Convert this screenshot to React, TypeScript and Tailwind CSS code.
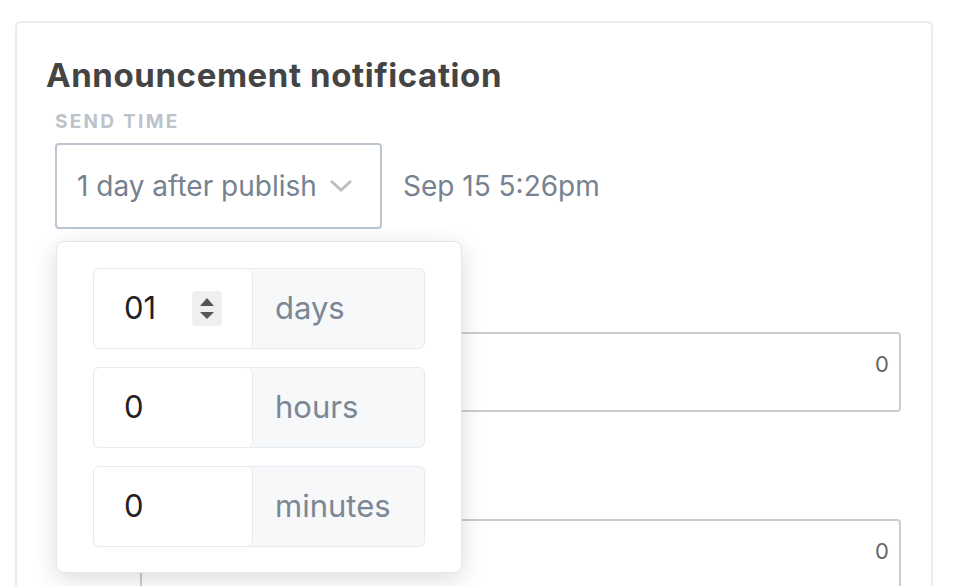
const font = { fontFamily: 'Inter, "Noto Sans", sans-serif' }

function Spinner() {
  return (
    <div className="flex h-[35px] w-[30px] flex-col items-center justify-center gap-[6px] rounded-sm bg-[#efefef]">
      <svg width="14" height="8" viewBox="0 0 14 8">
        <path d="M7 0 L14 8 L0 8 Z" fill="#555" />
      </svg>
      <svg width="14" height="7" viewBox="0 0 14 7">
        <path d="M0 0 L14 0 L7 7 Z" fill="#555" />
      </svg>
    </div>
  )
}

function UnitRow({ value, unit, spin }: { value: string; unit: string; spin?: boolean }) {
  return (
    <div className="flex h-[81px] rounded-md border border-[#e6ebf1] bg-[#f6f8fa]">
      <div className="flex w-[159px] items-center justify-between rounded-md border-r border-[#e6ebf1] bg-white pl-[30px] pr-[30px]">
        <span className="text-[31px] text-[#222]">{value}</span>
        {spin && <Spinner />}
      </div>
      <div className="flex items-center pl-[22px] text-[31px] text-[#7b8794]">{unit}</div>
    </div>
  )
}

function CountBox({ fragment }: { fragment?: string }) {
  return (
    <div className="relative h-[80px] rounded border-2 border-[#cdcdcd]">
      {fragment && (
        <span className="absolute right-[581px] top-[22px] text-[26px] leading-[30px] text-[#6b7280]">{fragment}</span>
      )}
      <span className="absolute right-[10px] top-[14px] text-[22px] text-[#666]">0</span>
    </div>
  )
}

export default function App() {
  return (
    <div className="h-[586px] overflow-hidden bg-white pl-[15px] pr-[25px] pt-[21px]" style={font}>
      <div className="h-[620px] rounded-md border-2 border-[#e8ecf1] pt-[32px]">
        <h1 className="pl-[29px] text-[33px] font-bold leading-[40px] tracking-[0.018em] text-[#444]">
          Announcement notification
        </h1>
        <div className="pl-[38px] pr-[30px]">
          <div className="mt-[15px] text-[19px] font-bold uppercase leading-[24px] tracking-[0.12em] text-[#bcc3cb]">
            Send time
          </div>
          <div className="relative mt-[9px] flex items-center gap-[21px]">
            <div className="flex h-[86px] w-[327px] items-center justify-between rounded border-2 border-[#bcc6d0] pl-[20px] pr-[27px]">
              <span className="text-[28px] text-[#76828f]">1 day after publish</span>
              <svg width="24" height="14" viewBox="0 0 24 14">
                <path d="M2 2 L12 11 L22 2" fill="none" stroke="#bdbdbd" strokeWidth="3" />
              </svg>
            </div>
            <span className="text-[28px] text-[#76828f]">Sep 15 5:26pm</span>

            <div className="absolute left-[1px] top-[98px] z-10 flex w-[406px] flex-col gap-[18px] rounded-lg border border-[#e6e6e6] bg-white px-[36px] pb-[25px] pt-[26px] shadow-[0_6px_24px_rgba(0,0,0,0.14)]">
              <UnitRow value="01" unit="days" spin />
              <UnitRow value="0" unit="hours" />
              <UnitRow value="0" unit="minutes" />
            </div>
          </div>

          <div className="ml-[85px] mt-[103px]">
            <CountBox />
            <div className="mt-[107px]">
              <CountBox fragment="Summary" />
            </div>
          </div>
        </div>
      </div>
    </div>
  )
}
